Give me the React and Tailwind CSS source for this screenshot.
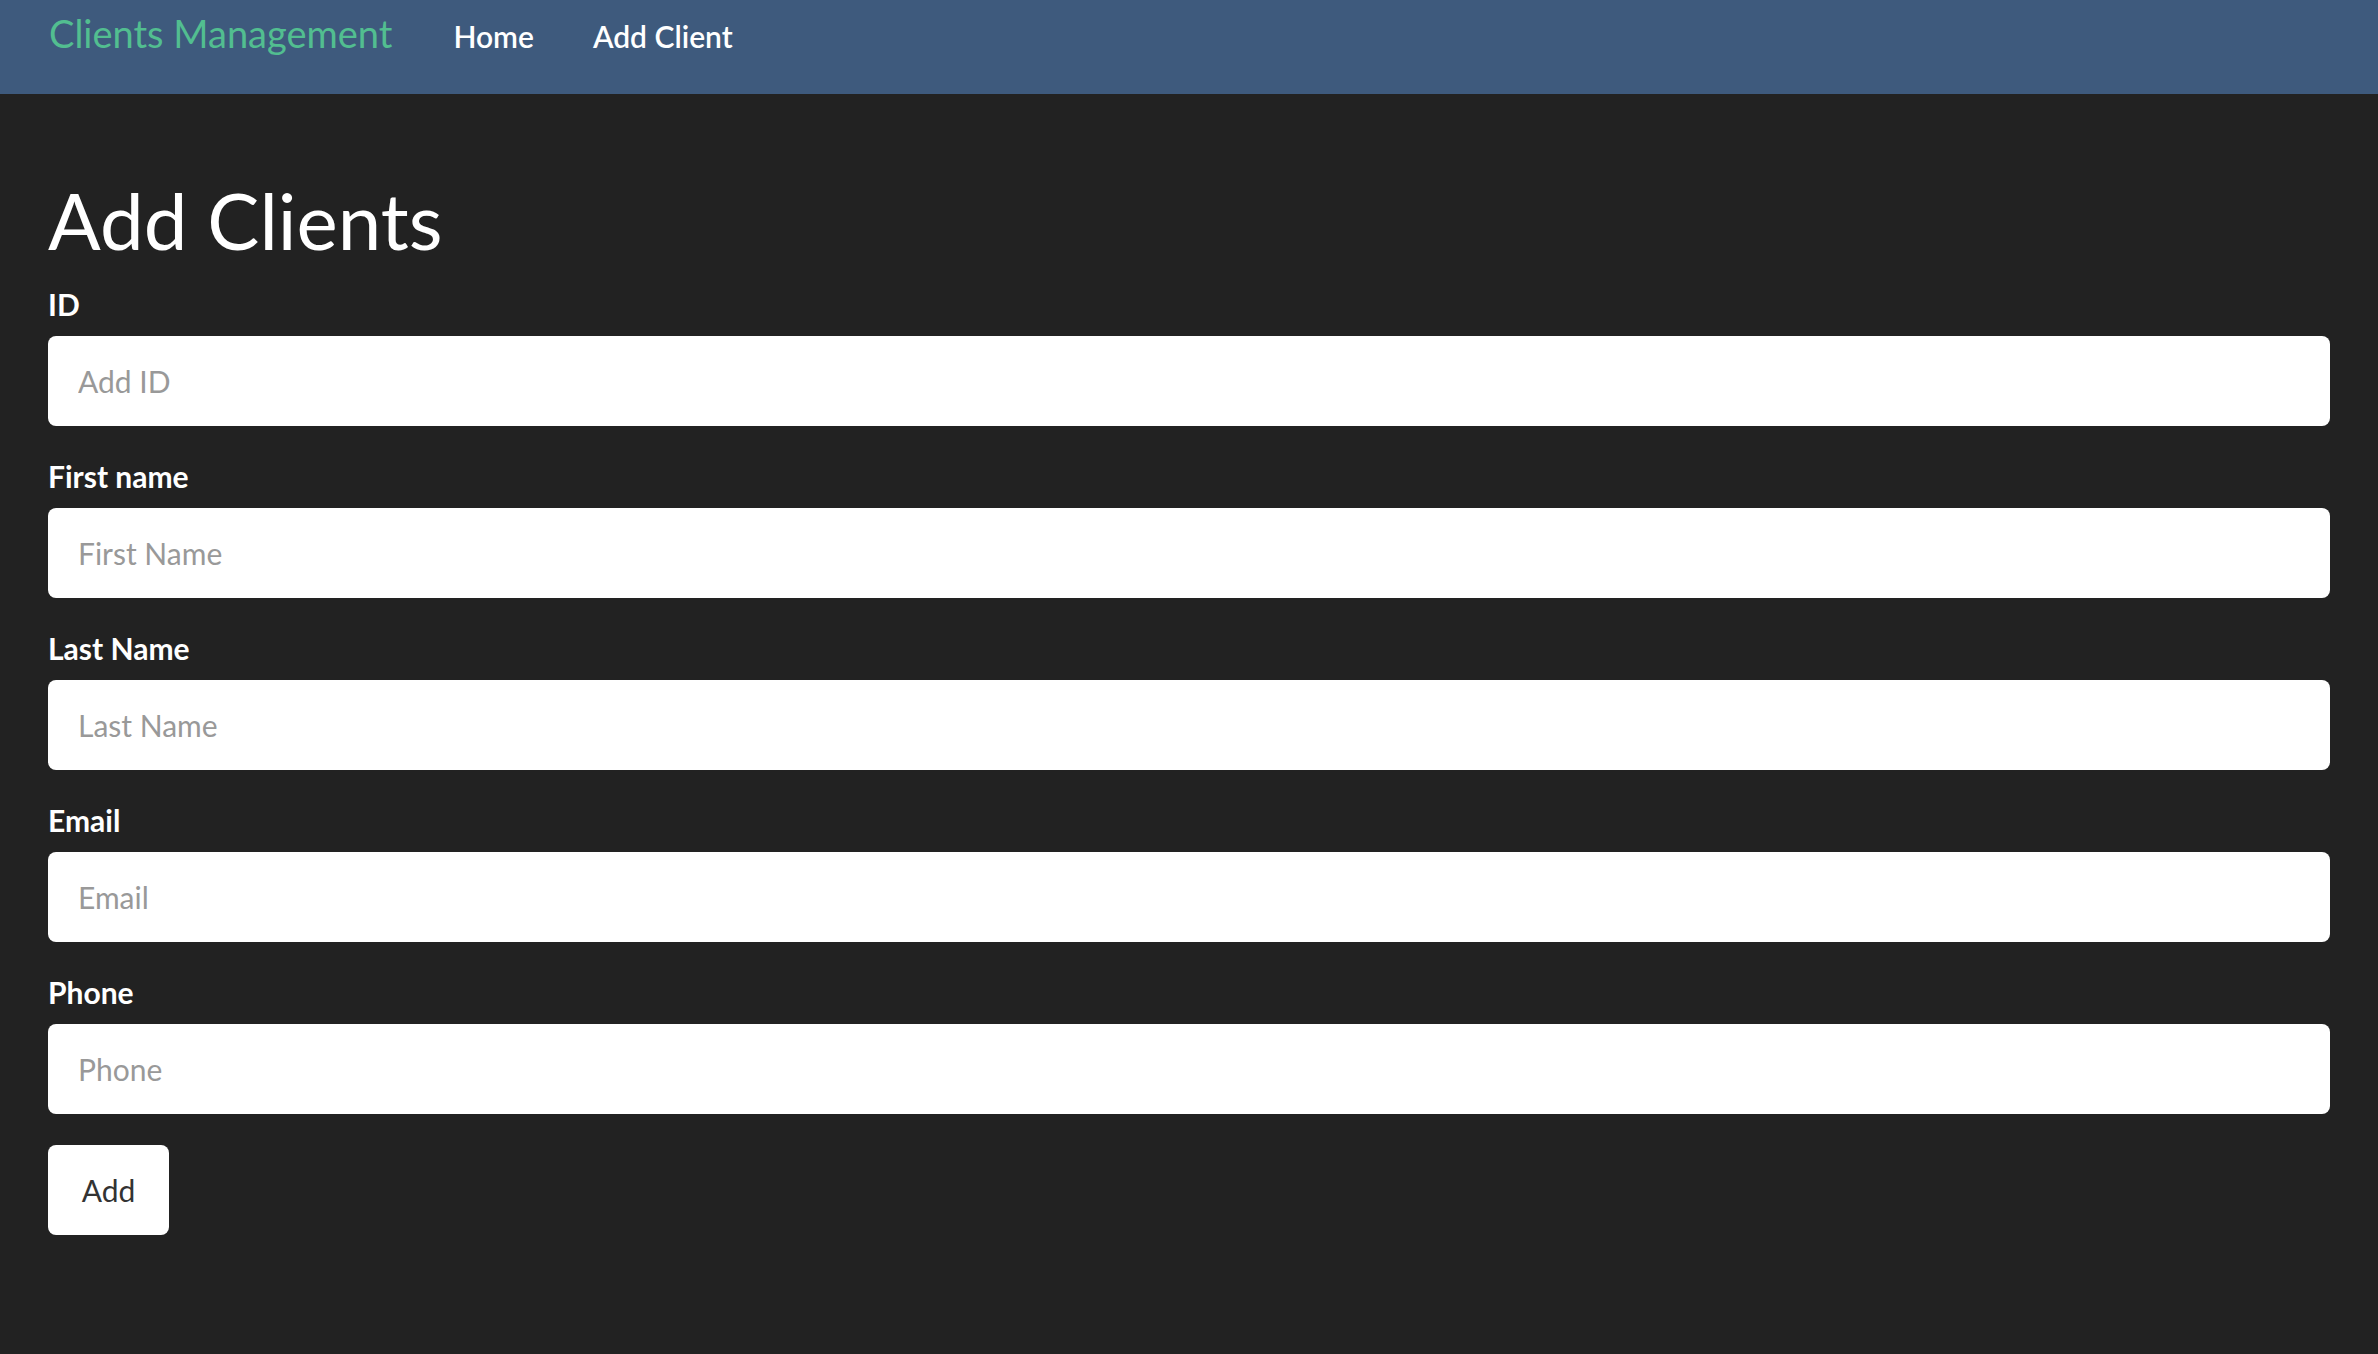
import React from 'react';

const fields = [
  { label: 'ID', placeholder: 'Add ID' },
  { label: 'First name', placeholder: 'First Name' },
  { label: 'Last Name', placeholder: 'Last Name' },
  { label: 'Email', placeholder: 'Email' },
  { label: 'Phone', placeholder: 'Phone' },
];

const App = () => {
  return (
    <div className="min-h-screen bg-[#222222] font-['Lato','Liberation_Sans',sans-serif] text-white">
      <nav className="h-[94px] bg-[#3e5a7d] px-[49px] pt-[6px] flex items-baseline">
        <a href="#" className="text-[38px] leading-[54px] text-[#52be90]">Clients Management</a>
        <a href="#" className="ml-[61px] text-[30px] leading-[54px] font-semibold text-white">Home</a>
        <a href="#" className="ml-[59px] text-[30px] leading-[54px] font-semibold text-white">Add Client</a>
      </nav>

      <div className="px-[48px] pt-[79px]">
        <h1 className="text-[78px] leading-[94px] font-normal mb-[15px]">Add Clients</h1>
        <form onSubmit={e => e.preventDefault()}>
          {fields.map((f, i) => (
            <div key={f.label} className={i > 0 ? 'mt-[28px]' : ''}>
              <label className="block text-[30px] leading-[45px] font-bold mb-[9px]">{f.label}</label>
              <input
                type="text"
                placeholder={f.placeholder}
                className="block w-full h-[90px] rounded-[8px] bg-white px-[30px] text-[30px] text-[#333] placeholder:text-[#999] outline-none"
              />
            </div>
          ))}
          <button
            type="submit"
            className="mt-[31px] h-[90px] w-[121px] rounded-[8px] bg-white text-[30px] text-[#333]"
          >
            Add
          </button>
        </form>
      </div>
    </div>
  );
};

export default App;
